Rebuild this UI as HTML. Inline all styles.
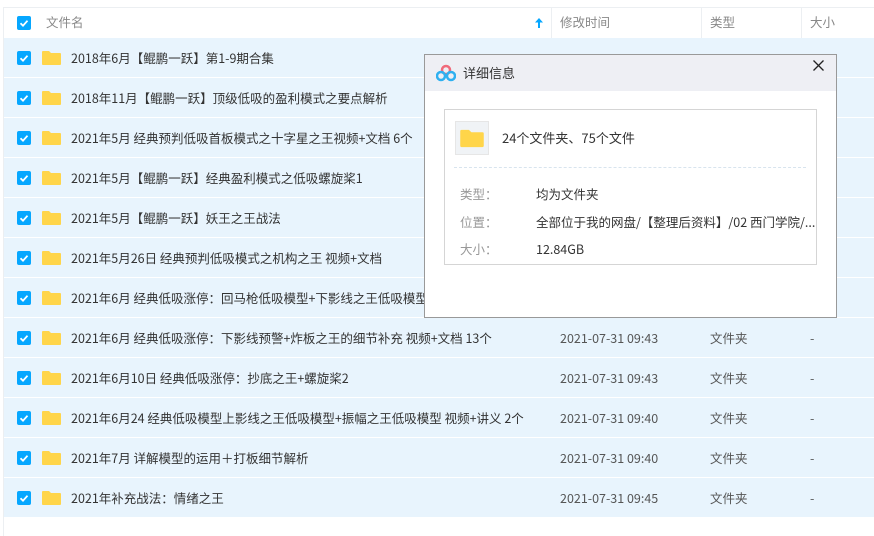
<!DOCTYPE html><html><head><meta charset="utf-8"><style>
*{margin:0;padding:0;box-sizing:border-box}
body{width:874px;height:536px;background:#fff;font-family:"Noto Sans CJK SC","Liberation Sans",sans-serif;font-size:12.5px;line-height:16px;color:#333;position:relative;overflow:hidden}
.vl{position:absolute;left:3px;top:7px;width:1px;height:529px;background:#eceff2}
.hdr{position:absolute;left:4px;top:7px;width:870px;height:30px;border-top:1px solid #eceff2;color:#888}
.hdr span{position:absolute;top:6px}
.sep{position:absolute;top:0;width:1px;height:30px;background:#eceff2}
.row{position:absolute;left:4px;width:870px;height:39px;background:#e8f4fd}
.cb{position:absolute;left:13px;top:13px;width:14px;height:14px;background:#06a7ff;border-radius:2px}
.cb svg{position:absolute;left:0;top:0}
.fd{position:absolute;left:37px;top:12px;width:21px;height:16px}
.nm{position:absolute;left:67px;top:12px;white-space:nowrap}
.dt{position:absolute;left:556px;top:12px;color:#555}
.tp{position:absolute;left:706px;top:12px;color:#555}
.sz{position:absolute;left:806px;top:12px;color:#555}
.dlg{position:absolute;left:424px;top:54px;width:413px;height:264px;background:#fff;border:1px solid #999}
.tb{height:36px;background:#eeeff4;position:relative}
.tb .t{position:absolute;left:38px;top:10px;font-size:13px}
.box{position:absolute;left:19px;top:54px;width:373px;height:156px;border:1px solid #d5d5d5}
.lb{position:absolute;left:15px;color:#999}
.vv{position:absolute;left:91px;white-space:nowrap}
</style></head><body>
<div class="vl"></div>
<div class="hdr">
<div class="cb" style="top:8px"><svg width="14" height="14"><path d="M3.5 7.2l2.5 2.5 4.5-5" stroke="#fff" stroke-width="1.8" fill="none"/></svg></div>
<span style="left:42px">文件名</span>
<svg style="position:absolute;left:531px;top:10px" width="8" height="10"><path d="M4 0L0 4.5h3V10h2V4.5h3z" fill="#06a7ff"/></svg>
<div class="sep" style="left:547px"></div><span style="left:556px">修改时间</span>
<div class="sep" style="left:697px"></div><span style="left:706px">类型</span>
<div class="sep" style="left:797px"></div><span style="left:806px">大小</span>
</div>
<div id="rows"></div>
<script>
var d=[["2018年6月【鲲鹏一跃】第1-9期合集","",""],["2018年11月【鲲鹏一跃】顶级低吸的盈利模式之要点解析","",""],["2021年5月 经典预判低吸首板模式之十字星之王视频+文档 6个","",""],["2021年5月【鲲鹏一跃】经典盈利模式之低吸螺旋桨1","",""],["2021年5月【鲲鹏一跃】妖王之王战法","",""],["2021年5月26日 经典预判低吸模式之机构之王 视频+文档","",""],["2021年6月 经典低吸涨停：回马枪低吸模型+下影线之王低吸模型 视频","",""],["2021年6月 经典低吸涨停：下影线预警+炸板之王的细节补充 视频+文档 13个","2021-07-31 09:43","文件夹"],["2021年6月10日 经典低吸涨停：抄底之王+螺旋桨2","2021-07-31 09:43","文件夹"],["2021年6月24 经典低吸模型上影线之王低吸模型+振幅之王低吸模型 视频+讲义 2个","2021-07-31 09:40","文件夹"],["2021年7月 详解模型的运用＋打板细节解析","2021-07-31 09:40","文件夹"],["2021年补充战法：情绪之王","2021-07-31 09:45","文件夹"]];
var h="";d.forEach(function(r,i){h+='<div class="row" style="top:'+(38+40*i)+'px"><div class="cb"><svg width="14" height="14"><path d="M3.5 7.2l2.5 2.5 4.5-5" stroke="#fff" stroke-width="1.8" fill="none"/></svg></div><svg class="fd" viewBox="0 0 21 16"><path d="M1 2a1 1 0 0 1 1-1h6l2 2h9a1 1 0 0 1 1 1v10a1 1 0 0 1-1 1H2a1 1 0 0 1-1-1z" fill="#ffd54a"/></svg><div class="nm">'+r[0]+'</div>'+(r[1]?'<div class="dt">'+r[1]+'</div><div class="tp">'+r[2]+'</div><div class="sz">-</div>':'')+'</div>'});
document.getElementById("rows").innerHTML=h;
</script>
<div class="dlg">
<div class="tb">
<svg style="position:absolute;left:11px;top:9px" width="20" height="18"><circle cx="10" cy="6" r="4" fill="none" stroke="#f06a7a" stroke-width="2.5"/><circle cx="5" cy="12" r="4" fill="none" stroke="#2fb0f0" stroke-width="2.5"/><circle cx="15" cy="12" r="4" fill="none" stroke="#2fb0f0" stroke-width="2.5"/></svg>
<span class="t">详细信息</span>
<svg style="position:absolute;left:388px;top:5px" width="11" height="11"><path d="M0.5 0.5l10 10M10.5 0.5l-10 10" stroke="#222" stroke-width="1.3"/></svg>
</div>
<div class="box">
<div style="position:absolute;left:10px;top:11px;width:34px;height:34px;border:1px solid #e6e6e6;background:#f0f3f6"></div>
<svg style="position:absolute;left:14px;top:18px" width="26" height="21" viewBox="0 0 21 16"><path d="M1 2a1 1 0 0 1 1-1h6l2 2h9a1 1 0 0 1 1 1v10a1 1 0 0 1-1 1H2a1 1 0 0 1-1-1z" fill="#ffd54a"/></svg>
<div style="position:absolute;left:57px;top:20px;font-size:13px">24个文件夹、75个文件</div>
<div style="position:absolute;left:9px;top:57px;width:352px;border-top:1px dashed #d8e4ee"></div>
<span class="lb" style="top:76px">类型：</span><span class="vv" style="top:76px">均为文件夹</span>
<span class="lb" style="top:104px">位置：</span><span class="vv" style="top:104px">全部位于我的网盘/【整理后资料】/02 西门学院/...</span>
<span class="lb" style="top:131px">大小：</span><span class="vv" style="top:131px">12.84GB</span>
</div>
</div>
</body></html>
